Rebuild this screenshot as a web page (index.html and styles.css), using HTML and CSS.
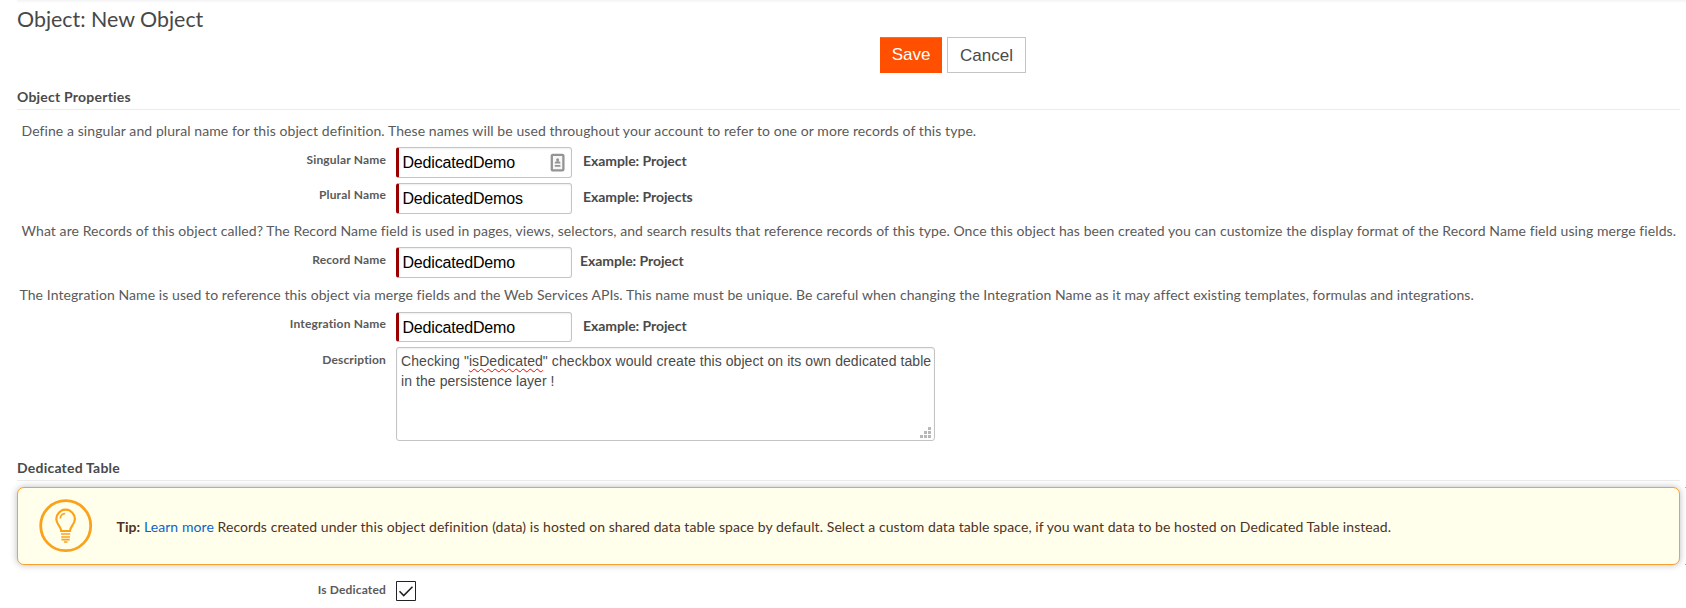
FILE: index.html
```html
<!DOCTYPE html>
<html lang="en">
<head>
<meta charset="utf-8">
<title>Object: New Object</title>
<link rel="stylesheet" href="styles.css">
</head>
<body>
<main class="page">
  <h1 class="title">Object: New Object</h1>
  <div class="actions">
    <button class="btn btn-primary">Save</button>
    <button class="btn btn-plain">Cancel</button>
  </div>

  <h2 class="section">Object Properties</h2>
  <p class="note note-1">Define a singular and plural name for this object definition. These names will be used throughout your account to refer to one or more records of this type.</p>
  <div class="row row-1">
    <label class="label label-low">Singular Name</label>
    <div class="field">DedicatedDemo
      <svg class="contact" width="15" height="19" viewBox="0 0 15 19"><rect x="1.800" y="1.800" width="11.600" height="15.600" rx="1" fill="#f6f6f6" stroke="#949494" stroke-width="2.300"/><circle cx="7.600" cy="6.700" r="1.500" fill="#949494"/><path d="M4.800 10.500V9.600L6 8.300h3.200l1.200 1.300v.9zM4.800 12h5.600v1.700H4.800z" fill="#949494"/></svg>
    </div>
    <span class="example">Example: Project</span>
  </div>
  <div class="row row-2">
    <label class="label">Plural Name</label>
    <div class="field">DedicatedDemos</div>
    <span class="example">Example: Projects</span>
  </div>
  <p class="note note-2">What are Records of this object called? The Record Name field is used in pages, views, selectors, and search results that reference records of this type. Once this object has been created you can customize the display format of the Record Name field using merge fields.</p>
  <div class="row row-3">
    <label class="label label-low">Record Name</label>
    <div class="field">DedicatedDemo</div>
    <span class="example example-near">Example: Project</span>
  </div>
  <p class="note note-3">The Integration Name is used to reference this object via merge fields and the Web Services APIs. This name must be unique. Be careful when changing the Integration Name as it may affect existing templates, formulas and integrations.</p>
  <div class="row row-4">
    <label class="label">Integration Name</label>
    <div class="field field-short">DedicatedDemo</div>
    <span class="example">Example: Project</span>
  </div>
  <div class="row row-5">
    <label class="label label-low">Description</label>
    <div class="area">Checking "<span class="misspelled">isDedicated</span>" checkbox would create this object on its own dedicated table<br>in the persistence layer !
      <svg class="grip" width="11" height="11" viewBox="0 0 11 11" fill="#b8b8b8"><path d="M8 0h3v3H8zM4 4h3v3H4zM8 4h3v3H8zM0 8h3v3H0zM4 8h3v3H4zM8 8h3v3H8z"/></svg>
    </div>
  </div>

  <h2 class="section section-2">Dedicated Table</h2>
  <div class="tip-line">
    <div class="tip">
      <svg class="bulb" width="54" height="54" viewBox="0 0 54 54" fill="none" stroke="#faa21b"><circle cx="26.700" cy="26.700" r="25" stroke-width="2.800"/><path d="M22.200 32c0-4.500-4.900-6.500-4.900-12a9.300 9.300 0 0 1 18.600 0c0 5.500-4.900 7.500-4.900 12z" stroke-width="2.200"/><path d="M21.200 19.500a5.500 5.500 0 0 1 5-5" stroke-width="1.700"/><path d="M22 35h9.200M22.200 38h8.800M22.500 40.600h8.200M25 43h3.500" stroke-width="1.600"/></svg>
      <p class="tip-text"><b>Tip:</b> <a class="link">Learn more</a> Records created under this object definition (data) is hosted on shared data table space by default. Select a custom data table space, if you want data to be hosted on Dedicated Table instead.</p>
    </div>
    <div class="tip-next"></div>
  </div>
  <div class="row row-6">
    <label class="label label-high">Is Dedicated</label>
    <svg class="check" width="20" height="20" viewBox="0 0 20 20" fill="none" stroke="#222"><path d="M.5.500h19v19H.5z" fill="#fff"/><path d="M3.500 10.300l4.200 4.200 8.800-8.800" stroke-width="1.600"/></svg>
  </div>
</main>
</body>
</html>
```
FILE: styles.css
```css
* { box-sizing: border-box; }
body { margin: 0; background: #fff; color: #4a4a4a; font-family: Lato, sans-serif; overflow: hidden; }
h1, h2, p { margin: 0; font-weight: 400; }
.page { width: 1686px; height: 608px; padding-left: 17px; display: flex; flex-direction: column; overflow: hidden; background: linear-gradient(#f3f3f3, #fff 3px) 17px 0 no-repeat; }
.title { height: 37px; font-size: 21.400px; line-height: 39px; color: #484848; }
.actions { height: 36px; padding-left: 863px; display: flex; gap: 5px; }
.btn { height: 36px; margin: 0; padding: 0; font: 17px "Liberation Sans", Arial, sans-serif; border: 1px solid; border-radius: 0; }
.btn-primary { width: 62px; color: #fff; background: #ff4f00; border-color: #ff6a26 #ff4f00 #ff4f00; }
.btn-plain { width: 79px; padding-top: 1px; color: #4a4a4a; background: #fff; border-color: #c4c4c4; }
.section { width: 1663px; height: 37px; padding-top: 15px; border-bottom: 1px solid #ebebeb; font-size: 14px; letter-spacing: .22px; font-weight: 700; line-height: 18px; }
.note { height: 37px; font-size: 14px; letter-spacing: .08px; line-height: 20px; padding: 11px 0 0 4.500px; white-space: nowrap; color: #5a5a5a; }
.note-2 { height: 33px; padding-top: 7px; }
.note-3 { height: 34px; padding: 7px 0 0 2.500px; }
.row { display: flex; flex: none; }
.row-1 { height: 36px; }
.row-2 { height: 31px; }
.row-3 { height: 31px; }
.row-4 { height: 35px; }
.row-5 { height: 95px; }
.label { width: 369px; margin-right: 10px; text-align: right; font-size: 12px; letter-spacing: .17px; font-weight: 700; line-height: 16px; padding-top: 4px; color: #5a5a5a; }
.label-low { padding-top: 5px; }
.label-high { padding-top: 1px; }
.field { position: relative; width: 176px; height: 31px; padding-left: 3.500px; border: 1px solid #c4c4c4; border-left: 3px solid #900; border-radius: 3px; font: 16px/29px "Liberation Sans", Arial, sans-serif; letter-spacing: -.18px; color: #000; box-shadow: inset 0 1px 2px #eee; }
.field-short { height: 30px; }
.contact { position: absolute; right: 6px; top: 5px; }
.example { margin-left: 11px; font-size: 14px; letter-spacing: -.07px; font-weight: 700; line-height: 28px; }
.example-near { margin-left: 8px; }
.area { position: relative; width: 539px; height: 94px; padding: 3px 4px; border: 1px solid #c4c4c4; border-radius: 3px; font: 14px/20px "Liberation Sans", Arial, sans-serif; letter-spacing: .07px; white-space: nowrap; box-shadow: inset 0 1px 2px #eee; }
.misspelled { text-decoration: underline wavy #f00 1px; text-underline-offset: 2px; }
.grip { position: absolute; right: 3px; bottom: 2px; }
.section-2 { height: 39px; padding-top: 17px; }
.tip-line { display: flex; gap: 5px; margin-top: 6px; }
.tip { flex: none; width: 1663px; height: 78px; display: flex; align-items: center; padding-left: 21px; border: 1px solid #f9a033; border-radius: 7px; background: #ffffec; box-shadow: 0 0 7px #bbb; }
.tip-next { width: 1px; height: 78px; border: solid #f9a033; border-width: 1px 0; background: #ffffec; }
.tip-text { margin-left: 23.500px; padding-top: 2px; font-size: 14px; letter-spacing: .075px; line-height: 20px; color: #4d3326; white-space: nowrap; }
.link { color: #0a63c9; }
.row-6 { margin-top: 16px; }
```
